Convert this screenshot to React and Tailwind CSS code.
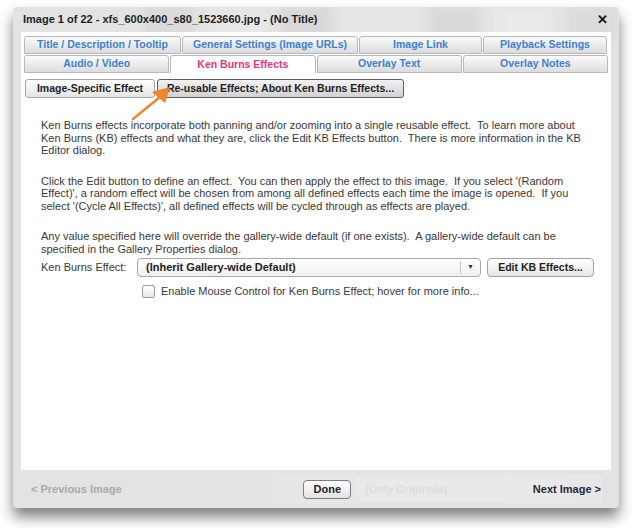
import React from "react";

const font = { fontFamily: '"Liberation Sans", Arial, sans-serif' };

const Tab = ({ label, active, className = "" }) => (
  <div
    className={
      "h-[18px] flex items-center justify-center rounded-t-[3px] border text-[10.5px] font-bold whitespace-nowrap " +
      (active
        ? "bg-white border-[#b8b8b8] border-b-white text-[#e2357d] h-[19px] "
        : "bg-gradient-to-b from-[#fbfbfb] to-[#dcdcdc] border-[#b8b8b8] text-[#3d80d4] ") +
      className
    }
  >
    {label}
  </div>
);

const Line = ({ children }) => <div className="whitespace-pre h-[12.5px] leading-[12.5px]">{children}</div>;

export default function App() {
  return (
    <div className="w-[632px] h-[528px] bg-white overflow-hidden pt-[7px] pl-[13px]" style={font}>
      <div className="relative w-[606px] h-[501px] rounded-[4px] bg-[#e3e3e3] shadow-[0_9px_14px_rgba(0,0,0,0.5)] flex flex-col overflow-hidden">
        {/* blurred thumbnails behind the title */}
        <div className="absolute inset-x-0 top-0 h-[32px] flex gap-[14px] pl-[130px] opacity-60 blur-[3px]">
          <div className="w-[50px] bg-[#d6d6d6]" />
          <div className="w-[60px] bg-[#ebebeb]" />
          <div className="w-[50px] bg-[#d2d2d2]" />
          <div className="w-[70px] bg-[#e9e9e9]" />
          <div className="w-[50px] bg-[#d4d4d4]" />
          <div className="w-[60px] bg-[#eeeeee]" />
          <div className="w-[50px] bg-[#d8d8d8]" />
        </div>

        <div className="relative h-[25px] flex items-center justify-between pl-[10px] pr-[11px]">
          <span className="text-[11px] font-bold text-[#1e1e1e]">
            Image 1 of 22 - xfs_600x400_s80_1523660.jpg - (No Title)
          </span>
          <span className="text-[13px] font-bold text-[#111] leading-none">✕</span>
        </div>

        <div className="relative mx-[8px] h-[438px] bg-white px-[3px] pt-[4px] text-[11px] text-[#383838]">
          <div className="flex gap-[1px]">
            <Tab label="Title / Description / Tooltip" className="w-[157px]" />
            <Tab label="General Settings (Image URLs)" className="w-[176px]" />
            <Tab label="Image Link" className="w-[123px]" />
            <Tab label="Playback Settings" className="w-[124px]" />
          </div>
          <div className="flex gap-[1px] mt-[1px] items-start">
            <Tab label="Audio / Video" className="flex-1" />
            <Tab label="Ken Burns Effects" active className="flex-1" />
            <Tab label="Overlay Text" className="flex-1" />
            <Tab label="Overlay Notes" className="flex-1" />
          </div>

          <div className="relative flex gap-[2px] mt-[5px] pl-[1px]">
            <div className="w-[130px] h-[19px] flex items-center justify-center rounded-[3px] border border-[#a8a8a8] bg-gradient-to-b from-white to-[#e4e4e4] text-[10.5px] font-bold text-[#222]">
              Image-Specific Effect
            </div>
            <div className="w-[247px] h-[19px] flex items-center justify-center rounded-[3px] border border-[#5c5c5c] bg-gradient-to-b from-[#f2f2f2] to-[#d2d2d2] text-[10.5px] font-bold text-[#222]">
              Re-usable Effects; About Ken Burns Effects...
            </div>
            {/* orange arrow pointing at the button */}
            <svg className="absolute left-[106px] top-[7px]" width="42" height="36" viewBox="0 0 42 36">
              <path d="M3 33 L30 11" stroke="#f0862a" strokeWidth="2.4" strokeLinecap="round" />
              <path d="M22 6 L40 1 L35 17 Z" fill="#f0862a" />
            </svg>
          </div>

          <div className="pl-[17px] mt-[21px]">
            <Line>Ken Burns effects incorporate both panning and/or zooming into a single reusable effect.  To learn more about</Line>
            <Line>Ken Burns (KB) effects and what they are, click the Edit KB Effects button.  There is more information in the KB</Line>
            <Line>Editor dialog.</Line>
            <div className="h-[18px]" />
            <Line>Click the Edit button to define an effect.  You can then apply the effect to this image.  If you select '(Random</Line>
            <Line>Effect)', a random effect will be chosen from among all defined effects each time the image is opened.  If you</Line>
            <Line>select '(Cycle All Effects)', all defined effects will be cycled through as effects are played.</Line>
            <div className="h-[18px]" />
            <Line>Any value specified here will override the gallery-wide default (if one exists).  A gallery-wide default can be</Line>
            <Line>specified in the Gallery Properties dialog.</Line>

            <div className="flex items-center mt-[3px] h-[19px]">
              <span className="w-[96px]">Ken Burns Effect:</span>
              <div className="w-[344px] h-[19px] flex items-center rounded-[4px] border border-[#a9a9a9] bg-gradient-to-b from-white to-[#efefef]">
                <span className="flex-1 pl-[8px] text-[11px] font-bold text-[#222]">(Inherit Gallery-wide Default)</span>
                <span className="w-[20px] h-[13px] border-l border-[#c4c4c4] flex items-center justify-center text-[7px] text-[#333]">▼</span>
              </div>
              <div className="ml-[6px] w-[107px] h-[19px] flex items-center justify-center rounded-[4px] border border-[#a2a2a2] bg-gradient-to-b from-white to-[#e6e6e6] text-[10.5px] font-bold text-[#222]">
                Edit KB Effects...
              </div>
            </div>

            <div className="flex items-center mt-[8px] pl-[101px] h-[13px]">
              <div className="w-[13px] h-[13px] rounded-[2px] border border-[#9c9c9c] bg-gradient-to-b from-white to-[#e8e8e8]" />
              <span className="ml-[6px]">Enable Mouse Control for Ken Burns Effect; hover for more info...</span>
            </div>
          </div>
        </div>

        <div className="relative flex-1 flex items-center justify-between px-[18px] text-[11px] font-bold">
          <div className="absolute left-[260px] top-[4px] w-[330px] h-[30px] rounded-[3px] bg-[#e8e8e8] opacity-70 flex items-center pl-[84px] text-[#dadada]">
            <div className="w-[212px] h-[24px] rounded-[3px] bg-[#ececec] flex items-center pl-[8px]">(Only Originals)</div>
          </div>
          <span className="relative text-[#a9a9a9]">&lt; Previous Image</span>
          <div className="relative w-[48px] h-[19px] flex items-center justify-center rounded-[4px] border border-[#7d7d7d] bg-gradient-to-b from-white to-[#e2e2e2] text-[#222]">
            Done
          </div>
          <span className="relative text-[#1d2b3a]">Next Image &gt;</span>
        </div>
      </div>
    </div>
  );
}
